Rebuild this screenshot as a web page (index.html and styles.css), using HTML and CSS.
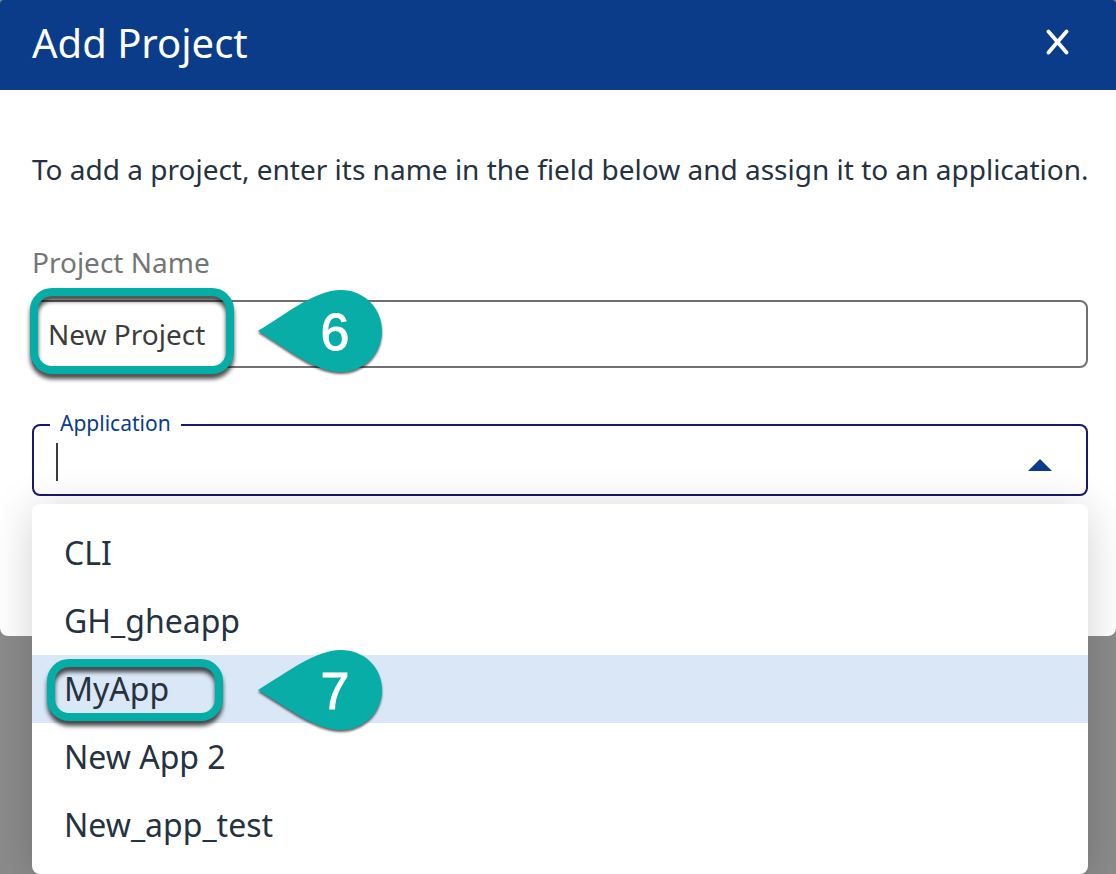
FILE: index.html
```html
<!DOCTYPE html>
<html lang="en">
<head>
<meta charset="utf-8">
<title>Add Project</title>
<link rel="stylesheet" href="styles.css">
</head>
<body>
<main class="dialog" role="dialog" aria-labelledby="dialog-title">
  <header class="dialog-header">
    <h1 class="dialog-title" id="dialog-title">Add Project</h1>
    <button class="close" type="button" aria-label="Close">
      <svg width="24" height="26" viewBox="0 0 24 26" aria-hidden="true"><path d="M3.5 2.5 21.5 23.5M21.5 2.5 3.5 23.5" fill="none" stroke="currentColor" stroke-width="3.8" stroke-linecap="round"/></svg>
    </button>
  </header>
  <form class="dialog-body">
    <p class="intro">To add a project, enter its name in the field below and assign it to an application.</p>
    <label class="name-label" for="project-name">Project Name</label>
    <div class="name-field">
      <input class="name-input" id="project-name" type="text" value="New Project">
      <span class="highlight highlight-name"></span>
      <svg class="callout callout-name" width="126" height="86" viewBox="0 0 126 86" role="img" aria-label="Step 6">
        <path class="drop" d="M0 42C30 24 57 1 83 1C106 1 124 19 124 42C124 65 106 83 83 83C57 83 30 60 0 42Z"/>
        <text class="digit" x="77" y="61">6</text>
      </svg>
    </div>
    <div class="app-field">
      <label class="app-label" for="application">Application</label>
      <input class="app-input" id="application" type="text" role="combobox" aria-expanded="true" aria-controls="app-menu">
      <span class="caret"></span>
      <svg class="arrow" width="26" height="13" viewBox="0 0 26 13" aria-hidden="true"><path d="M1 13 13 1 25 13Z"/></svg>
      <ul class="menu" id="app-menu" role="listbox" aria-label="Application">
        <li class="option" role="option">CLI</li>
        <li class="option" role="option">GH_gheapp</li>
        <li class="option option-active" role="option" aria-selected="true">MyApp
          <span class="highlight highlight-option"></span>
          <svg class="callout callout-option" width="126" height="86" viewBox="0 0 126 86" role="img" aria-label="Step 7">
            <path class="drop" d="M0 41C30 23 57 1 83 1C106 1 124 18 124 41C124 63 106 81 83 81C57 81 30 59 0 41Z"/>
            <text class="digit" x="77" y="60">7</text>
          </svg>
        </li>
        <li class="option" role="option">New App 2</li>
        <li class="option" role="option">New_app_test</li>
      </ul>
    </div>
  </form>
</main>
</body>
</html>
```

FILE: styles.css
```css
* { box-sizing: border-box; }

html { background: #8b8b8b; }

body {
  min-height: 100vh;
  margin: 0;
  color: #253240;
  font-family: "Noto Sans", sans-serif;
}

.dialog {
  background: #fff;
  border-radius: 8px;
}

.dialog-header {
  display: flex;
  align-items: center;
  justify-content: space-between;
  padding: 16px 47px 20px 32px;
  background: #0a3c89;
  color: #fff;
  border-radius: 4px 4px 0 0;
}

.dialog-title {
  margin: 0;
  font-size: 40px;
  font-weight: 400;
  line-height: 54px;
}

.close {
  display: flex;
  padding: 0 0 2px;
  border: 0;
  background: none;
  color: inherit;
}

.dialog-body {
  display: flex;
  flex-direction: column;
  padding: 59px 28px 140px 32px;
}

.intro {
  margin: 0 -20px 0 0;
  font-size: 28px;
  line-height: 40px;
}

.name-label {
  margin: 53px 0 18px;
  color: #757575;
  font-size: 28px;
  line-height: 40px;
}

.name-field {
  position: relative;
  display: flex;
}

.name-input {
  width: 100%;
  height: 68px;
  padding: 0 14px;
  border: 2px solid #707070;
  border-radius: 8px;
  background: #fff;
  color: #3c3c3c;
  font: 28px/40px "Noto Sans", sans-serif;
}

.app-field {
  position: relative;
  display: flex;
  margin-top: 56px;
}

.app-input {
  width: 100%;
  height: 72px;
  padding: 0 80px 0 22px;
  border: 2px solid #171a6b;
  border-radius: 8px;
  background: #fff;
  color: #3c3c3c;
  font: 28px/40px "Noto Sans", sans-serif;
}

.app-label {
  position: absolute;
  top: -16px;
  left: 18px;
  padding: 0 10px;
  background: #fff;
  color: #0a3c89;
  font-size: 21px;
  line-height: 30px;
}

.caret {
  position: absolute;
  top: 19px;
  left: 24px;
  width: 2px;
  height: 38px;
  background: #3c3c3c;
}

.arrow {
  position: absolute;
  top: 34px;
  right: 35px;
  fill: #0a3c89;
}

.menu {
  position: absolute;
  top: 80px;
  left: 0;
  right: 0;
  margin: 0;
  padding: 15px 0;
  list-style: none;
  background: #fff;
  border-radius: 8px;
  box-shadow: 0 6px 44px rgba(0, 0, 0, 0.18);
}

.option {
  position: relative;
  padding: 12px 32px;
  font-size: 32px;
  line-height: 44px;
}

.option-active { background: #dae7f7; }

.highlight {
  position: absolute;
  border: 8px solid #05ada7;
  border-radius: 22px;
  filter: drop-shadow(0 5px 2px rgba(0, 0, 0, 0.7));
}

.highlight-name {
  top: -12px;
  left: -2px;
  width: 204px;
  height: 86px;
}

.highlight-option {
  top: 4px;
  left: 15px;
  width: 176px;
  height: 62px;
}

.callout {
  position: absolute;
  left: 226px;
  overflow: visible;
}

.callout-name { top: -11px; }
.callout-option { top: -6px; }

.drop {
  fill: #08ada8;
  filter: drop-shadow(0 2px 1px rgba(0, 0, 0, 0.6));
}

.digit {
  fill: #fff;
  stroke: #fff;
  stroke-width: 1px;
  font-family: "Liberation Sans", sans-serif;
  font-size: 52px;
  text-anchor: middle;
}
```
